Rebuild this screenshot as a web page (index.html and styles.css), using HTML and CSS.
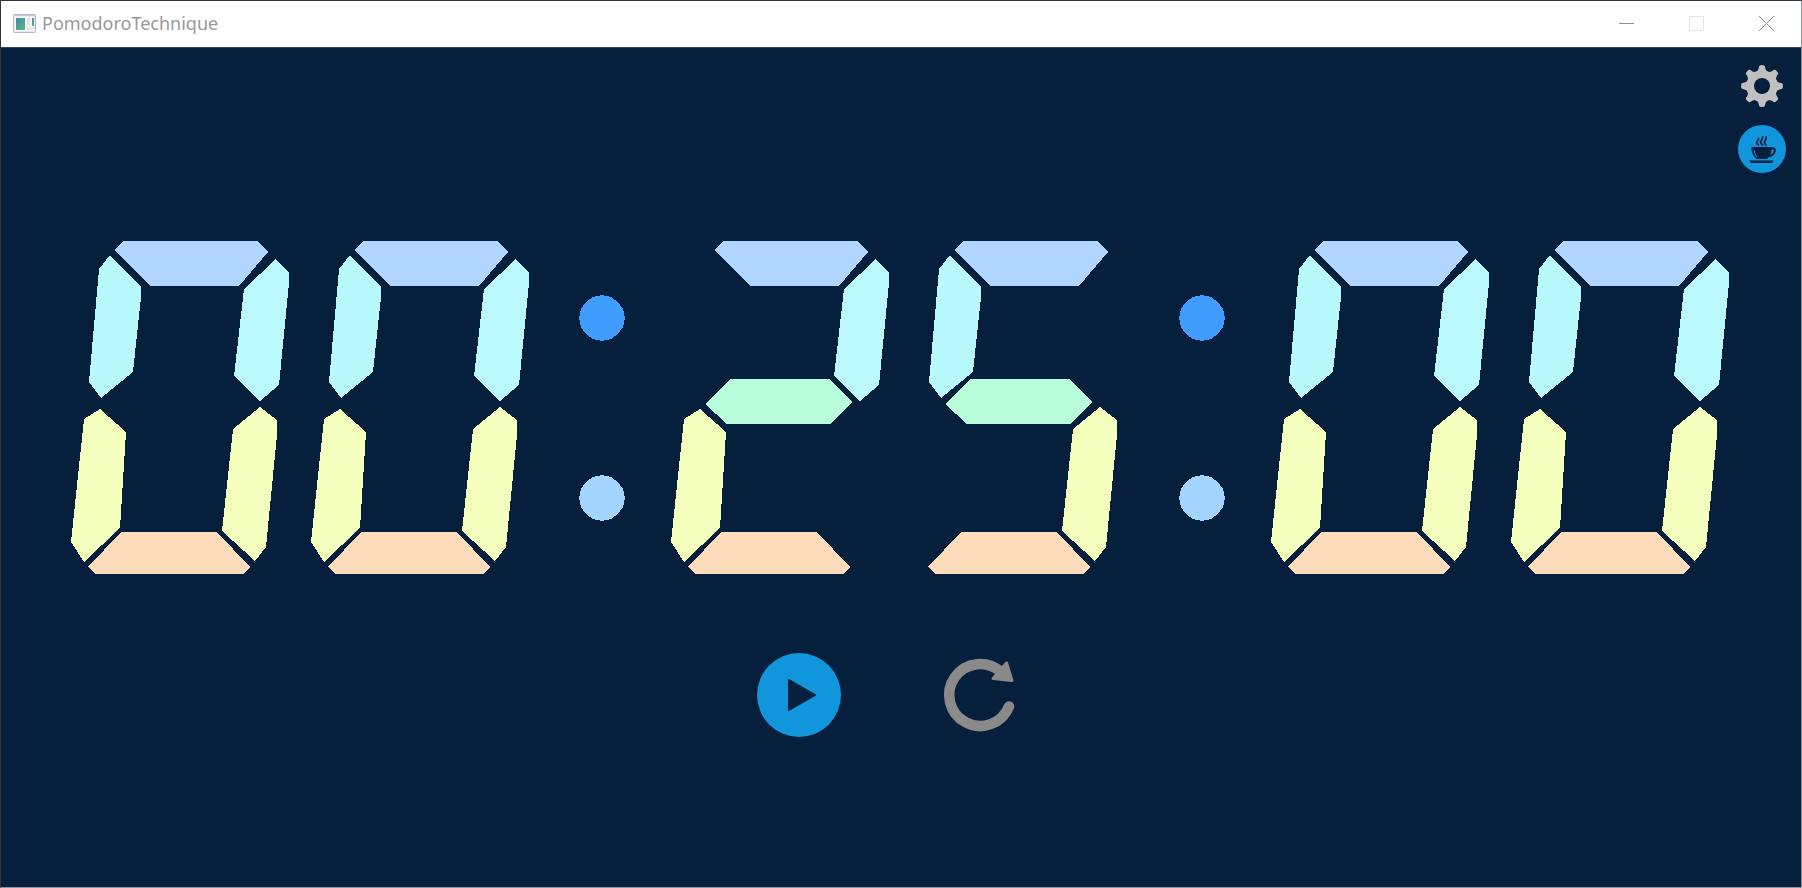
FILE: index.html
```html
<!DOCTYPE html>
<html lang="en">
<head>
<meta charset="utf-8">
<title>PomodoroTechnique</title>
<link rel="stylesheet" href="styles.css">
</head>
<body>
<svg class="defs" aria-hidden="true">
  <defs>
    <polygon id="top" class="seg-top" points="63,20 197,20 208,31 179,65 90,65 55,29"/>
    <polygon id="ul" class="seg-ul" points="50,34 81,66 81,76 73,151 41,177 29,161 39,48"/>
    <polygon id="ur" class="seg-ur" points="216,38 229,52 229,62 219,164 200,180 174,155 184,68"/>
    <polygon id="mid" class="seg-mid" points="70,158 170,158 192,181 170,203 67,203 45,183"/>
    <polygon id="ll" class="seg-low" points="40,188 66,211 60,307 24,341 11,321 24,198"/>
    <polygon id="lr" class="seg-low" points="200,186 217,199 217,214 206,326 195,340 162,310 173,208"/>
    <polygon id="bottom" class="seg-bottom" points="61,311 157,311 190,346 184,353 36,353 28,346"/>
    <polygon id="dot" points="23,0 21,9 16,16 9,21 0,23 -9,21 -16,16 -21,9 -23,0 -21,-9 -16,-16 -9,-21 0,-23 9,-21 16,-16 21,-9"/>
    <g id="zero"><use href="#top"/><use href="#ul"/><use href="#ur"/><use href="#ll"/><use href="#lr"/><use href="#bottom"/></g>
    <g id="two"><use href="#top"/><use href="#ur"/><use href="#mid"/><use href="#ll"/><use href="#bottom"/></g>
    <g id="five"><use href="#top"/><use href="#ul"/><use href="#mid"/><use href="#lr"/><use href="#bottom"/></g>
    <g id="colon"><use href="#dot" class="dot-upper" x="61" y="97"/><use href="#dot" class="dot-lower" x="61" y="277"/></g>
    <linearGradient id="pane" x1="0" y1="0" x2="1" y2="1"><stop offset="0" stop-color="#4a86b0"/><stop offset="1" stop-color="#5cb87c"/></linearGradient>
  </defs>
</svg>
<div class="window">
  <header class="titlebar">
    <svg class="app-icon" viewBox="0 0 23 19" aria-hidden="true">
      <rect x="0.5" y="0.5" width="22" height="18" rx="1" fill="#e9ebf0" stroke="#b3b7bf"/>
      <path d="M1 1.5H22" stroke="#c6cad6"/>
      <rect x="2" y="3" width="19" height="14" fill="#f8f8f8"/>
      <rect x="3" y="4" width="9" height="12" fill="url(#pane)"/>
      <rect x="14" y="4" width="3" height="7" fill="#e2e4e6"/>
      <rect x="19" y="4" width="2" height="8" fill="url(#pane)"/>
      <rect x="14" y="13" width="7" height="3" fill="#e8e8e8"/>
    </svg>
    <h1 class="title">PomodoroTechnique</h1>
    <div class="window-controls">
      <button class="control" type="button" aria-label="Minimize"><svg viewBox="0 0 15 15"><path d="M0 7.5H15" stroke="#8e8e8e"/></svg></button>
      <button class="control" type="button" aria-label="Maximize" disabled><svg viewBox="0 0 15 15"><rect x="0.5" y="0.5" width="14" height="14" stroke="#e6e6e6"/></svg></button>
      <button class="control" type="button" aria-label="Close"><svg viewBox="0 0 15 15"><path d="M0 0L15 15M15 0L0 15" stroke="#888"/></svg></button>
    </div>
  </header>
  <main class="content">
    <nav class="tools" aria-label="Tools">
      <button class="tool" type="button" aria-label="Settings">
        <svg viewBox="0 0 48 48">
          <g fill="#c0c0c0">
            <g id="teeth"><path d="M17.500 10Q20.500 9 21 4.500Q21.200 3 24 3Q26.800 3 27 4.500Q27.500 9 30.500 10V38Q27.500 39 27 43.500Q26.800 45 24 45Q21.200 45 21 43.500Q20.500 39 17.500 38Z"/><path d="M17.500 10Q20.500 9 21 4.500Q21.200 3 24 3Q26.800 3 27 4.500Q27.500 9 30.500 10V38Q27.500 39 27 43.500Q26.800 45 24 45Q21.200 45 21 43.500Q20.500 39 17.500 38Z" transform="rotate(90 24 24)"/></g>
            <use href="#teeth" transform="rotate(45 24 24)"/>
            <circle cx="24" cy="24" r="15.500"/>
          </g>
          <circle cx="24" cy="24" r="8" fill="#061f3d"/>
        </svg>
      </button>
      <button class="tool" type="button" aria-label="Take a break">
        <svg viewBox="0 0 48 48">
          <circle cx="24" cy="24" r="24" fill="#1296db"/>
          <g fill="#061f3d">
            <path d="M13.500 22H33.500Q34 30 29 34H19Q13 30 13.500 22Z"/>
            <path d="M11.500 35.500H35.500L34 38H13Z"/>
          </g>
          <g fill="none" stroke="#061f3d" stroke-width="2" stroke-linecap="round">
            <path d="M33 23.500Q37 22.500 36.800 26Q36 30 31.500 31"/>
            <path d="M20.500 20Q17.500 18 19.500 16Q21 14.500 20.500 13.500M24.500 20Q21.500 17.500 23.500 15Q25 13 24.500 12M28 20Q25.500 18 27 15.500Q28.500 13.500 28 12" stroke-width="1.700"/>
          </g>
          <path d="M16 25Q16.500 29 19 32" fill="none" stroke="#1296db"/>
        </svg>
      </button>
    </nav>
    <div class="clock" role="timer" aria-label="00:25:00">
      <svg viewBox="1 20 240 335"><use href="#zero"/></svg>
      <svg viewBox="1 20 240 335"><use href="#zero"/></svg>
      <svg viewBox="0 20 120 335"><use href="#colon"/></svg>
      <svg viewBox="1 20 240 335"><use href="#two"/></svg>
      <svg viewBox="1 20 240 335"><use href="#five"/></svg>
      <svg viewBox="0 20 120 335"><use href="#colon"/></svg>
      <svg viewBox="1 20 240 335"><use href="#zero"/></svg>
      <svg viewBox="1 20 240 335"><use href="#zero"/></svg>
    </div>
    <div class="actions">
      <button class="action" type="button" aria-label="Start">
        <svg viewBox="0 0 84 84">
          <circle cx="42" cy="42" r="42" fill="#1296db"/>
          <path d="M32 27L58 42L32 57Z" fill="#061f3d" stroke="#061f3d" stroke-width="2" stroke-linejoin="round"/>
        </svg>
      </button>
      <button class="action" type="button" aria-label="Reset">
        <svg viewBox="0 0 84 84">
          <path d="M70 53.500A31 31 0 1 1 62 19" fill="none" stroke="#8a8a8a" stroke-width="10.500" stroke-linecap="round"/>
          <path d="M67.500 10L73 27.500L54 25.500Z" fill="#8a8a8a" stroke="#8a8a8a" stroke-width="3" stroke-linejoin="round"/>
        </svg>
      </button>
    </div>
  </main>
</div>
</body>
</html>
```
FILE: styles.css
```css
* { box-sizing: border-box; }
body {
  margin: 0;
  background: #061f3d;
  font-family: "Noto Sans", "Open Sans", sans-serif;
}
button {
  padding: 0;
  border: 0;
  background: none;
  cursor: pointer;
}
svg { display: block; }
.defs { position: absolute; width: 0; height: 0; }

.window {
  display: flex;
  flex-direction: column;
  min-height: 100vh;
  border: 1px solid;
  border-color: #333 #8f959b #8f959b #333;
}
.titlebar {
  display: flex;
  align-items: center;
  height: 46px;
  padding: 0 0 2px 12px;
  background: #fff;
}
.app-icon { width: 23px; height: 19px; }
.title {
  margin: 0 0 0 6px;
  font-size: 18px;
  line-height: 24px;
  font-weight: 400;
  color: #999;
}
.window-controls { display: flex; margin-left: auto; }
.control {
  display: grid;
  place-items: center;
  width: 70px;
  height: 44px;
}
.control svg { width: 15px; height: 15px; fill: none; }

.content {
  flex: 1;
  display: flex;
  flex-direction: column;
  border-top: 1px solid #2f4358;
  background: #061f3d;
}
.tools {
  display: flex;
  flex-direction: column;
  align-items: flex-end;
  gap: 15px;
  padding: 14px 15px 0 0;
}
.tool, .tool svg { width: 48px; height: 48px; }

.clock {
  display: grid;
  grid-template-columns: 2fr 2fr 1fr 2fr 2fr 1fr 2fr 2fr;
  padding: 0 60px;
  margin-top: 68px;
}
.clock svg { width: 100%; shape-rendering: crispEdges; }
.seg-top { fill: #b0d6ff; }
.seg-ul { fill: #b8fafc; }
.seg-ur { fill: #bafaff; }
.seg-mid { fill: #baffdc; }
.seg-low { fill: #f4ffbd; }
.seg-bottom { fill: #fcdcba; }
.dot-upper { fill: #409cff; }
.dot-lower { fill: #a3d4ff; }

.actions {
  display: flex;
  justify-content: center;
  gap: 98px;
  margin: 77px 22px 24px 0;
}
.action, .action svg { width: 84px; height: 84px; }
```
